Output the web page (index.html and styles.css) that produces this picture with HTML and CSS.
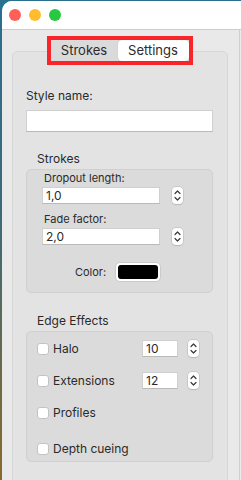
FILE: index.html
```html
<!DOCTYPE html>
<html lang="en">
<head>
    <meta charset="UTF-8">
    <meta name="viewport" content="width=device-width, initial-scale=1.0">
    <title>Settings</title>
    <link rel="stylesheet" href="styles.css">
</head>
<body>
    <div class="window">
        <header class="titlebar">
            <span class="light red"></span>
            <span class="light yellow"></span>
            <span class="light green"></span>
        </header>
        <div class="content">
            <main class="main">
                <div class="tabs">
                    <div class="segmented">
                        <span class="seg">Strokes</span>
                        <span class="seg active">Settings</span>
                    </div>
                </div>
                <section class="panel">
                    <label class="field-label">Style name:</label>
                    <div class="text-field wide"></div>

                    <h4 class="group-title">Strokes</h4>
                    <div class="group strokes">
                        <span class="small-label">Dropout length:</span>
                        <div class="num-row">
                            <div class="text-field long">1,0</div>
                            <span class="stepper">
                                <svg width="11" height="17" viewBox="0 0 11 17"><path d="M3 6.5 L5.5 4 L8 6.5 M3 10.5 L5.5 13 L8 10.5" fill="none" stroke="#3a3a3a" stroke-width="1.2" stroke-linecap="round" stroke-linejoin="round"/></svg>
                            </span>
                        </div>
                        <span class="small-label second">Fade factor:</span>
                        <div class="num-row">
                            <div class="text-field long">2,0</div>
                            <span class="stepper">
                                <svg width="11" height="17" viewBox="0 0 11 17"><path d="M3 6.5 L5.5 4 L8 6.5 M3 10.5 L5.5 13 L8 10.5" fill="none" stroke="#3a3a3a" stroke-width="1.2" stroke-linecap="round" stroke-linejoin="round"/></svg>
                            </span>
                        </div>
                        <div class="color-row">
                            <span class="small-label">Color:</span>
                            <span class="well"><span class="swatch"></span></span>
                        </div>
                    </div>

                    <h4 class="group-title edge">Edge Effects</h4>
                    <div class="group effects">
                        <div class="check-row">
                            <label class="check"><span class="box"></span>Halo</label>
                            <div class="text-field short">10</div>
                            <span class="stepper">
                                <svg width="11" height="17" viewBox="0 0 11 17"><path d="M3 6.5 L5.5 4 L8 6.5 M3 10.5 L5.5 13 L8 10.5" fill="none" stroke="#3a3a3a" stroke-width="1.2" stroke-linecap="round" stroke-linejoin="round"/></svg>
                            </span>
                        </div>
                        <div class="check-row">
                            <label class="check"><span class="box"></span>Extensions</label>
                            <div class="text-field short">12</div>
                            <span class="stepper">
                                <svg width="11" height="17" viewBox="0 0 11 17"><path d="M3 6.5 L5.5 4 L8 6.5 M3 10.5 L5.5 13 L8 10.5" fill="none" stroke="#3a3a3a" stroke-width="1.2" stroke-linecap="round" stroke-linejoin="round"/></svg>
                            </span>
                        </div>
                        <div class="check-row">
                            <label class="check"><span class="box"></span>Profiles</label>
                        </div>
                        <div class="check-row last">
                            <label class="check"><span class="box"></span>Depth cueing</label>
                        </div>
                    </div>
                </section>
            </main>
            <div class="side"></div>
        </div>
    </div>
</body>
</html>
```

FILE: styles.css
```css
body {
    margin: 0;
    height: 480px;
    overflow: hidden;
    font-family: Inter, "Noto Sans", sans-serif;
    color: #2a2a2a;
    background: linear-gradient(#2a6f90, #3d6a78 45%, #8a6a2c);
}
.window {
    margin: 1px 0 0 2px;
    width: 239px;
    height: 479px;
    background-color: #e9e9e9;
    border-top-left-radius: 10px;
    overflow: hidden;
}
.titlebar {
    height: 28px;
    background-color: #fff;
    border-bottom: 1px solid #cdcdcd;
    display: flex;
    align-items: center;
    gap: 8px;
    padding-left: 7px;
}
.light {
    width: 12px;
    height: 12px;
    border-radius: 50%;
}
.red { background-color: #fe5f57; }
.yellow { background-color: #febc2e; }
.green { background-color: #28c840; }
.content {
    display: flex;
    height: 450px;
}
.main {
    width: 237px;
    flex-shrink: 0;
    border-right: 1px solid #cfcfcf;
    padding-top: 6px;
}
.side {
    flex: 1;
    background-color: #ececec;
}
.tabs {
    position: relative;
    z-index: 1;
    display: flex;
    justify-content: center;
    padding-right: 2px;
}
.segmented {
    display: flex;
    border: 4px solid #f8252a;
    background-color: #dadada;
    height: 21px;
}
.seg {
    font-size: 13px;
    line-height: 21px;
    text-align: center;
}
.seg:first-child {
    width: 67px;
}
.seg.active {
    width: 71px;
    background-color: #fff;
    border-radius: 4px;
    box-shadow: 0 0 1px rgba(0,0,0,0.3);
}
.panel {
    margin: -14px 0 0 10px;
    width: 216px;
    height: 480px;
    box-sizing: border-box;
    background-color: #e3e3e3;
    border: 1px solid #d6d6d6;
    border-radius: 5px;
    padding: 36px 14px 0 13px;
}
.field-label {
    display: block;
    font-size: 12px;
    line-height: 16px;
}
.text-field {
    background-color: #fff;
    border: 1px solid #d0d0d0;
    border-bottom-color: #b9b9b9;
    box-sizing: border-box;
    font-size: 12px;
    padding-left: 3px;
}
.wide {
    margin-top: 6px;
    height: 22px;
}
.group-title {
    margin: 19px 0 2px 11px;
    font-weight: normal;
    font-size: 12px;
    line-height: 16px;
}
.group-title.edge {
    margin-top: 20px;
}
.group {
    background-color: #dbdbdb;
    border: 1px solid #d0d0d0;
    border-radius: 5px;
}
.strokes {
    padding: 1px 0 10px 15px;
}
.small-label {
    display: block;
    font-size: 11px;
    line-height: 14px;
    margin-left: 2px;
}
.small-label.second {
    margin-top: 8px;
}
.num-row {
    display: flex;
    align-items: center;
    gap: 12px;
    margin-top: 2px;
}
.long {
    width: 118px;
    height: 17px;
    line-height: 15px;
}
.short {
    height: 17px;
    line-height: 15px;
}
.stepper {
    display: flex;
    width: 11px;
    height: 17px;
    background-color: #fff;
    border-radius: 4px;
    box-shadow: 0 0 0 0.5px #b5b5b5, 0 1px 1px rgba(0,0,0,0.12);
}
.color-row {
    display: flex;
    justify-content: center;
    align-items: center;
    gap: 9px;
    margin-top: 17px;
    padding-right: 18px;
}
.color-row .small-label {
    margin-left: 0;
}
.well {
    width: 46px;
    height: 20px;
    box-sizing: border-box;
    background-color: #fff;
    border: 1px solid #cacaca;
    border-radius: 5px;
    padding: 2px;
    display: flex;
}
.swatch {
    flex: 1;
    background-color: #000;
    border-radius: 3px;
}
.effects {
    display: flex;
    flex-direction: column;
    gap: 15px;
    padding: 8px 13px 4px 10px;
}
.check-row {
    display: grid;
    grid-template-columns: 1fr 36px 11px;
    column-gap: 10px;
    align-items: center;
    height: 17px;
}
.check-row.last {
    margin-top: 4px;
}
.check {
    display: flex;
    align-items: center;
    gap: 4px;
    font-size: 12px;
}
.box {
    width: 12px;
    height: 12px;
    box-sizing: border-box;
    background-color: #fff;
    border: 1px solid #c3c3c3;
    border-radius: 3px;
}
```
